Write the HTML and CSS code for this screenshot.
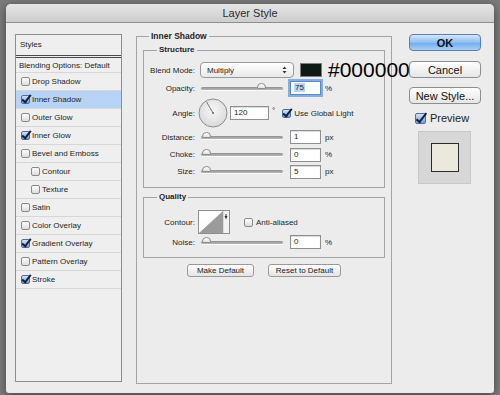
FILE: index.html
```html
<!doctype html>
<html lang="en">
    <head>
        <meta charset="utf-8">
        <meta name="viewport" content="width=device-width, initial-scale=1">
        <title>Layer Style</title>
        <link rel="stylesheet" href="styles.css">
    </head>
    <body>
        <div class="window">
            <div class="titlebar">Layer Style</div>
            <div class="content">
                <div class="styles-list">
                    <div class="list-head">Styles</div>
                    <div class="list-row blending">Blending Options: Default</div>
                    <div class="list-row"><span class="cb"></span>Drop Shadow</div>
                    <div class="list-row is-selected"><span class="cb is-checked"></span>Inner Shadow</div>
                    <div class="list-row"><span class="cb"></span>Outer Glow</div>
                    <div class="list-row"><span class="cb is-checked"></span>Inner Glow</div>
                    <div class="list-row"><span class="cb"></span>Bevel and Emboss</div>
                    <div class="list-row is-indent"><span class="cb"></span>Contour</div>
                    <div class="list-row is-indent"><span class="cb"></span>Texture</div>
                    <div class="list-row"><span class="cb"></span>Satin</div>
                    <div class="list-row"><span class="cb"></span>Color Overlay</div>
                    <div class="list-row"><span class="cb is-checked"></span>Gradient Overlay</div>
                    <div class="list-row"><span class="cb"></span>Pattern Overlay</div>
                    <div class="list-row"><span class="cb is-checked"></span>Stroke</div>
                </div>

                <fieldset class="panel">
                    <legend>Inner Shadow</legend>

                    <fieldset class="group structure">
                        <legend>Structure</legend>
                        <div class="row h16">
                            <span class="lbl">Blend Mode:</span>
                            <div class="select">
                                <span>Multiply</span>
                                <svg width="5" height="8" viewBox="0 0 5 8"><path d="M0.5 3 L2.5 0.5 L4.5 3 Z M0.5 5 L2.5 7.5 L4.5 5 Z" fill="#333"/></svg>
                            </div>
                            <span class="swatch"></span>
                            <span class="hex">#000000</span>
                        </div>
                        <div class="row h20">
                            <span class="lbl">Opacity:</span>
                            <div class="slider"><span class="thumb" style="left: 56px"></span></div>
                            <span class="field is-focused"><span class="sel">75</span></span>
                            <span class="unit">%</span>
                        </div>
                        <div class="row h30">
                            <span class="lbl">Angle:</span>
                            <svg class="dial" width="30" height="30" viewBox="0 0 30 30">
                                <defs>
                                    <radialGradient id="dialfill" cx="50%" cy="40%" r="60%">
                                        <stop offset="0" stop-color="#f7f7f7"/>
                                        <stop offset="1" stop-color="#d9d9d9"/>
                                    </radialGradient>
                                </defs>
                                <circle cx="15" cy="15" r="14" fill="url(#dialfill)" stroke="#8c8c8c"/>
                                <line x1="15" y1="15" x2="8.5" y2="3.8" stroke="#7a7a7a" stroke-width="1"/>
                                <circle cx="15" cy="15" r="1" fill="#666"/>
                            </svg>
                            <span class="field wide">120</span>
                            <span class="deg">°</span>
                            <span class="cb is-checked"></span>
                            <span class="cb-label">Use Global Light</span>
                        </div>
                        <div class="row h18">
                            <span class="lbl">Distance:</span>
                            <div class="slider"><span class="thumb" style="left: 1px"></span></div>
                            <span class="field">1</span>
                            <span class="unit">px</span>
                        </div>
                        <div class="row h17">
                            <span class="lbl">Choke:</span>
                            <div class="slider"><span class="thumb" style="left: 1px"></span></div>
                            <span class="field">0</span>
                            <span class="unit">%</span>
                        </div>
                        <div class="row h17">
                            <span class="lbl">Size:</span>
                            <div class="slider"><span class="thumb" style="left: 1px"></span></div>
                            <span class="field">5</span>
                            <span class="unit">px</span>
                        </div>
                    </fieldset>

                    <fieldset class="group quality">
                        <legend>Quality</legend>
                        <div class="row h24">
                            <span class="lbl">Contour:</span>
                            <svg class="contour" width="32" height="24" viewBox="0 0 32 24">
                                <rect x="0.5" y="0.5" width="31" height="23" fill="#fff" stroke="#8f8f8f"/>
                                <rect x="25" y="1" width="6" height="22" fill="#f2f2f2"/>
                                <line x1="25" y1="1" x2="25" y2="23" stroke="#c4c4c4"/>
                                <polygon points="1,23 25,1 25,23" fill="#9b9b9b"/>
                                <polygon points="26.5,6 29.5,6 28,9.5" fill="#333"/>
                                <line x1="28" y1="4" x2="28" y2="7" stroke="#333"/>
                            </svg>
                            <span class="cb aa"></span>
                            <span class="cb-label">Anti-aliased</span>
                        </div>
                        <div class="row h16">
                            <span class="lbl">Noise:</span>
                            <div class="slider"><span class="thumb" style="left: 1px"></span></div>
                            <span class="field">0</span>
                            <span class="unit">%</span>
                        </div>
                    </fieldset>

                    <div class="defaults">
                        <button class="small-btn">Make Default</button>
                        <button class="small-btn reset">Reset to Default</button>
                    </div>
                </fieldset>

                <div class="actions">
                    <button class="btn is-default">OK</button>
                    <button class="btn">Cancel</button>
                    <button class="btn">New Style...</button>
                    <div class="preview-toggle">
                        <span class="cb big is-checked"></span>
                        <span>Preview</span>
                    </div>
                    <div class="preview-box">
                        <div class="preview-sample"></div>
                    </div>
                </div>
            </div>
        </div>
    </body>
</html>
```

FILE: styles.css
```css
html, body {
    margin: 0;
    height: 100%;
}
body {
    background: #7a7a7a;
    font-family: "Liberation Sans", Arial, sans-serif;
    font-size: 8px;
    color: #1e1e1e;
    padding: 4px 6px 0;
    box-sizing: border-box;
    overflow: hidden;
}
.window {
    width: 488px;
    height: 389px;
    background: #ececec;
    border-radius: 5px 5px 3px 3px;
    box-shadow: 0 2px 8px rgba(0, 0, 0, 0.45);
    display: flex;
    flex-direction: column;
    overflow: hidden;
}
.titlebar {
    flex-shrink: 0;
    height: 18px;
    line-height: 18px;
    text-align: center;
    font-size: 11px;
    color: #2b2b2b;
    background: linear-gradient(#e6e6e6, #cdcdcd);
    border-bottom: 1px solid #8f8f8f;
}
.content {
    display: flex;
    align-items: flex-start;
    padding: 11px 0 0 9px;
}

/* styles list */
.styles-list {
    width: 107px;
    height: 348px;
    box-sizing: border-box;
    border: 1px solid #8d8d8d;
    background: #efefef;
    margin-right: 14px;
}
.list-head {
    height: 20px;
    line-height: 20px;
    padding-left: 4px;
    border-bottom: 3px double #4a4a4a;
}
.list-row {
    height: 17px;
    border-bottom: 1px solid #d6d6d6;
    display: flex;
    align-items: center;
    padding-left: 5px;
    gap: 2px;
}
.list-row.blending {
    height: 14px;
    padding-left: 3px;
}
.list-row.is-indent {
    padding-left: 15px;
}
.list-row.is-selected {
    background: #b7d3f6;
}

/* checkbox */
.cb {
    flex-shrink: 0;
    position: relative;
    width: 9px;
    height: 9px;
    box-sizing: border-box;
    border: 1px solid #8a8a8a;
    border-radius: 2px;
    background: linear-gradient(#ffffff, #dcdcdc);
}
.cb.is-checked {
    border-color: #4f6f9e;
    background: linear-gradient(#d2e3f8, #6f9fdc);
}
.cb.is-checked::after {
    content: '';
    position: absolute;
    left: 2px;
    top: -3px;
    width: 3px;
    height: 8px;
    border: solid #14233d;
    border-width: 0 2px 2px 0;
    transform: rotate(38deg);
}
.cb.big {
    width: 11px;
    height: 11px;
}
.cb.big::after {
    left: 3px;
    top: -3px;
    height: 10px;
}
.cb-label {
    margin-left: 3px;
    white-space: nowrap;
}

/* middle panel */
fieldset {
    margin: 0;
    min-width: 0;
    border: 1px solid #a4a4a4;
}
legend {
    font-weight: bold;
    line-height: 10px;
    padding: 0 2px;
}
.panel {
    margin-top: -3px;
    width: 256px;
    height: 353px;
    box-sizing: border-box;
    padding: 4px 6px 0;
    flex-shrink: 0;
}
.panel > legend {
    font-size: 8.5px;
    margin-left: 6px;
}
.group {
    padding: 7px 0 7px;
}
.group > legend {
    margin-left: 13px;
}
.quality {
    margin-top: 4px;
    padding-top: 8px;
}
.row {
    display: flex;
    align-items: center;
    white-space: nowrap;
}
.row > * {
    flex-shrink: 0;
}
.h16 { height: 16px; }
.h17 { height: 17px; }
.h18 { height: 18px; }
.h20 { height: 20px; }
.h24 { height: 24px; }
.h30 { height: 30px; }
.lbl {
    width: 51px;
    text-align: right;
    margin-right: 5px;
}
.select {
    width: 94px;
    height: 16px;
    box-sizing: border-box;
    border: 1px solid #9a9a9a;
    border-radius: 4px;
    background: linear-gradient(#ffffff, #e9e9e9);
    display: flex;
    align-items: center;
    justify-content: space-between;
    padding: 0 6px;
    margin-right: 6px;
}
.swatch {
    width: 22px;
    height: 14px;
    box-sizing: border-box;
    border: 1px solid #7d7d7d;
    background: #0e1914;
    margin-right: 6px;
}
.hex {
    font-size: 21px;
    line-height: 16px;
    color: #000;
}
.slider {
    position: relative;
    width: 82px;
    height: 3px;
    margin-left: 1px;
    border-radius: 2px;
    background: linear-gradient(#8f8f8f, #b9b9b9);
    box-shadow: 0 1px 0 #fafafa;
}
.thumb {
    position: absolute;
    top: -4px;
    width: 9px;
    height: 6px;
    box-sizing: border-box;
    border: 1px solid #8c8c8c;
    border-radius: 5px 5px 2px 2px;
    background: linear-gradient(#ffffff, #e2e2e2);
}
.field {
    width: 31px;
    height: 14px;
    box-sizing: border-box;
    border: 1px solid #8f8f8f;
    background: #fff;
    box-shadow: inset 0 1px 1px rgba(0, 0, 0, 0.15);
    padding-left: 3px;
    line-height: 12px;
    margin-left: 7px;
}
.field.is-focused {
    box-shadow: 0 0 0 2px #86aee0;
    border-color: #5a86c2;
}
.field .sel {
    background: #b9d5f6;
    padding: 0 1px;
}
.field.wide {
    width: 39px;
    margin-left: 2px;
}
.unit {
    margin-left: 4px;
}
.dial {
    margin-left: -2px;
}
.deg {
    margin-left: 3px;
    margin-right: 7px;
    align-self: flex-start;
    padding-top: 8px;
}
.contour {
    margin-left: -2px;
    margin-right: 14px;
}
.defaults {
    display: flex;
    justify-content: center;
    gap: 14px;
    margin-top: 6px;
}
.small-btn {
    width: 67px;
    height: 13px;
    padding: 0;
    font-family: inherit;
    font-size: 8px;
    color: #1a1a1a;
    border: 1px solid #9a9a9a;
    border-radius: 3px;
    background: linear-gradient(#ffffff, #e4e4e4);
}
.small-btn.reset {
    width: 73px;
}

/* right column */
.actions {
    width: 72px;
    margin-left: 17px;
    display: flex;
    flex-direction: column;
    position: relative;
}
.btn {
    width: 72px;
    height: 17px;
    padding: 0;
    font-family: inherit;
    font-size: 11px;
    color: #111;
    border: 1px solid #8e8e8e;
    border-radius: 4px;
    background: linear-gradient(#ffffff, #e6e6e6);
}
.btn + .btn {
    margin-top: 10px;
}
.btn:last-of-type {
    margin-top: 9px;
}
.btn.is-default {
    font-weight: bold;
    border-color: #5a7eb3;
    background: linear-gradient(#d6e7fb, #8dbdf2 50%, #6ea9ec 51%, #a9d0f8);
}
.preview-toggle {
    display: flex;
    align-items: center;
    gap: 4px;
    height: 12px;
    margin-top: 8px;
    padding-left: 6px;
    font-size: 11px;
}
.preview-box {
    width: 53px;
    height: 53px;
    box-sizing: border-box;
    margin: 7px 0 0 9px;
    border: 1px solid #c8c8c8;
    background: #d7d7d7;
    display: flex;
    align-items: center;
    justify-content: center;
}
.preview-sample {
    width: 28px;
    height: 29px;
    box-sizing: border-box;
    border: 1px solid #2a2a2a;
    background: #ebe8de;
}
```
